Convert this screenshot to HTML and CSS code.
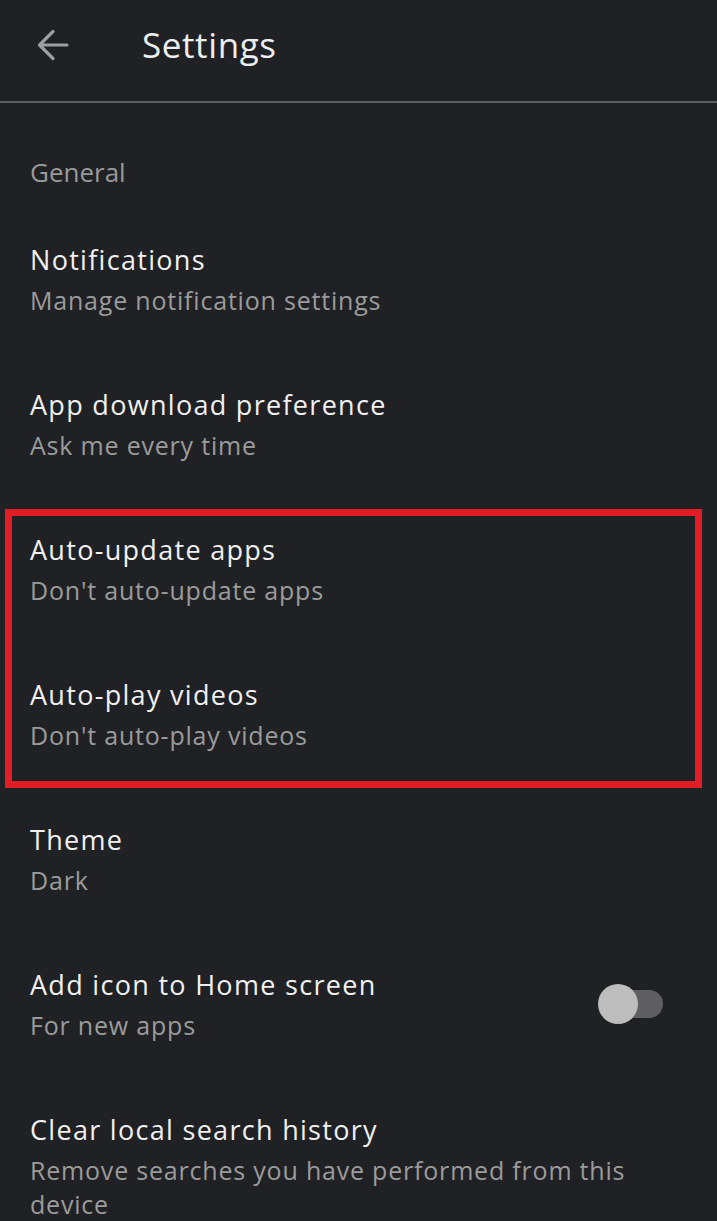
FILE: index.html
```html
<!DOCTYPE html>
<html lang="en">

<head>
    <meta charset="UTF-8">
    <title>Settings</title>
    <meta name="viewport" content="width=device-width, initial-scale=1.0">
    <link rel="stylesheet" href="styles.css">
</head>

<body>
    <header class="top-bar">
        <button class="back-btn" aria-label="Back">
            <svg width="36" height="36" viewBox="0 0 36 36">
                <path d="M32 18H5M18 4.5L4.5 18L18 31.5" fill="none" stroke="#9d9fa3" stroke-width="3.2" stroke-linecap="round" stroke-linejoin="round"/>
            </svg>
        </button>
        <h1>Settings</h1>
    </header>

    <main class="settings">
        <div class="section-title">General</div>

        <div class="item">
            <div class="item-text">
                <div class="title">Notifications</div>
                <div class="subtitle">Manage notification settings</div>
            </div>
        </div>

        <div class="item">
            <div class="item-text">
                <div class="title">App download preference</div>
                <div class="subtitle">Ask me every time</div>
            </div>
        </div>

        <div class="highlight">
            <div class="item">
                <div class="item-text">
                    <div class="title">Auto-update apps</div>
                    <div class="subtitle">Don't auto-update apps</div>
                </div>
            </div>

            <div class="item">
                <div class="item-text">
                    <div class="title">Auto-play videos</div>
                    <div class="subtitle">Don't auto-play videos</div>
                </div>
            </div>
        </div>

        <div class="item">
            <div class="item-text">
                <div class="title">Theme</div>
                <div class="subtitle">Dark</div>
            </div>
        </div>

        <div class="item">
            <div class="item-text">
                <div class="title">Add icon to Home screen</div>
                <div class="subtitle">For new apps</div>
            </div>
            <div class="switch"><span class="knob"></span></div>
        </div>

        <div class="item">
            <div class="item-text">
                <div class="title">Clear local search history</div>
                <div class="subtitle">Remove searches you have performed from this device</div>
            </div>
        </div>
    </main>
</body>

</html>
```

FILE: styles.css
```css
html,
body {
    margin: 0;
    padding: 0;
    background: #202124;
    overflow: hidden;
}

body {
    font-family: "Open Sans", Roboto, sans-serif;
    color: #eeeeee;
}

.top-bar {
    height: 89px;
    padding-bottom: 12px;
    display: flex;
    align-items: center;
    border-bottom: 2px solid #5d5e61;
}

.back-btn {
    margin-left: 35px;
    padding: 0;
    width: 36px;
    height: 36px;
    background: none;
    border: none;
    display: flex;
}

.top-bar h1 {
    margin: 0 0 0 71px;
    font-size: 35px;
    font-weight: 500;
    color: #eceef0;
    letter-spacing: 0.6px;
}

.section-title {
    padding: 49px 30px 14px;
    line-height: 40px;
    font-size: 26px;
    color: #9a9a9a;
}

.item {
    display: flex;
    align-items: center;
    padding: 34px 54px 34px 30px;
}

.item-text {
    flex: 1;
    max-width: 610px;
}

.title {
    font-size: 27px;
    line-height: 40px;
    letter-spacing: 1.3px;
    color: #f0f0f0;
}

.subtitle {
    margin-top: 3px;
    font-size: 25px;
    line-height: 34px;
    letter-spacing: 0.8px;
    color: #9b9b9b;
}

.highlight {
    position: relative;
}

.highlight::after {
    content: "";
    position: absolute;
    top: 13px;
    bottom: -2px;
    left: 5px;
    right: 15px;
    border: 7px solid #e31d26;
}

.switch {
    position: relative;
    width: 60px;
    height: 28px;
    border-radius: 14px;
    background: #5f5f61;
}

.knob {
    position: absolute;
    left: -5px;
    top: -6px;
    width: 40px;
    height: 40px;
    border-radius: 50%;
    background: #bdbdbd;
}
```
